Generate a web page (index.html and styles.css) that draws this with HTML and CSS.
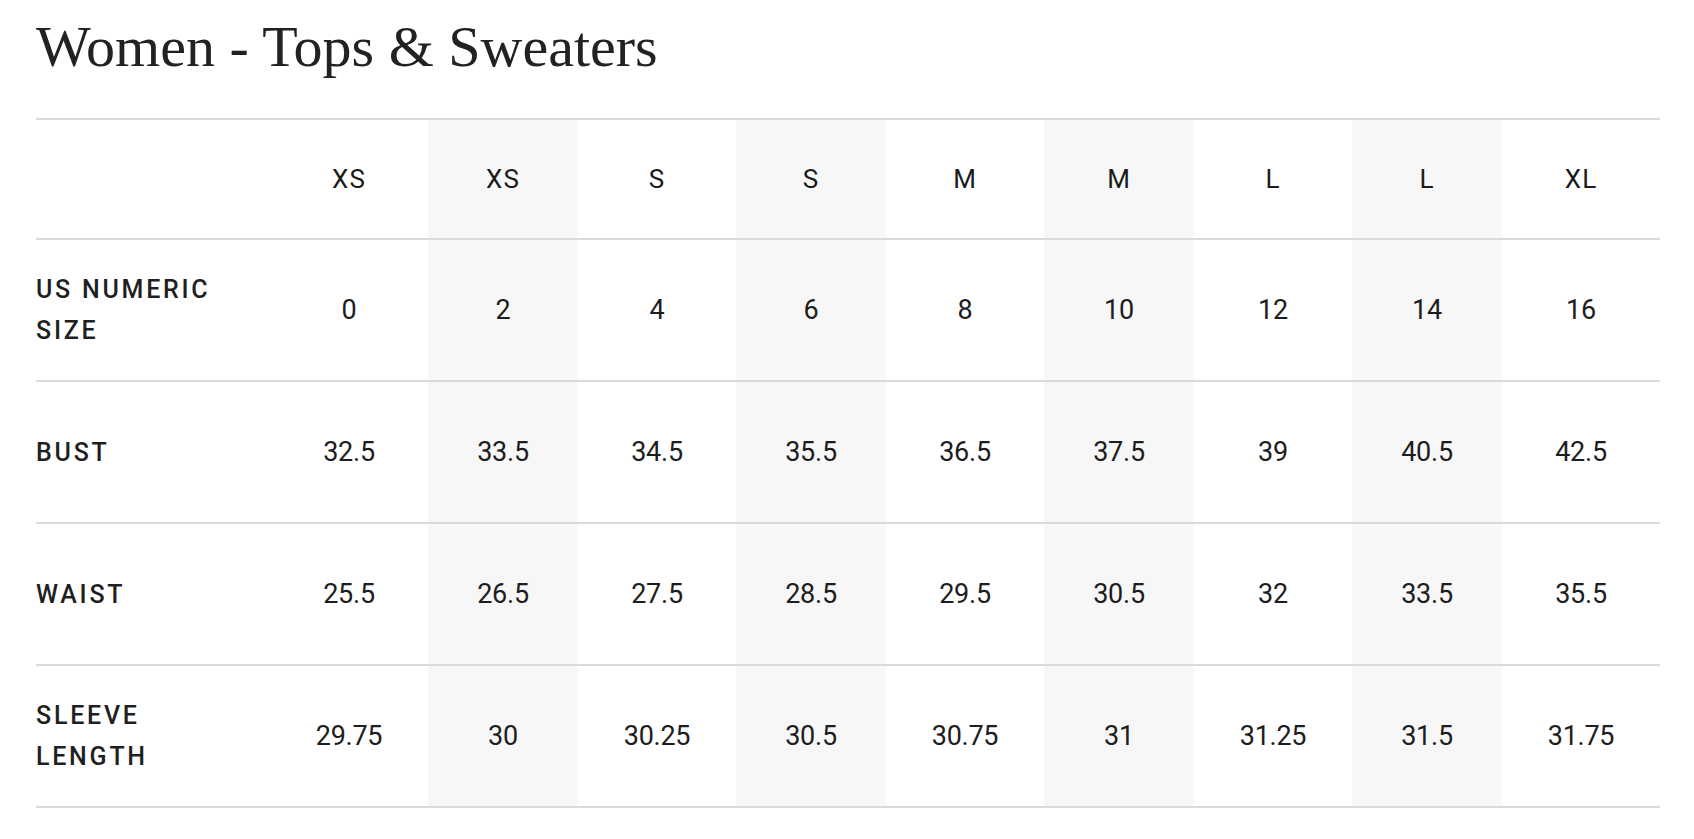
FILE: index.html
```html
<!DOCTYPE html>
<html lang="en">
<head>
<meta charset="utf-8">
<title>Women - Tops &amp; Sweaters</title>
<link rel="stylesheet" href="styles.css">
</head>
<body>
<main class="page">
  <h1 class="title">Women - Tops &amp; Sweaters</h1>
  <div class="chart" role="table">
    <div class="row head" role="row">
      <div class="cell label" role="columnheader"></div>
      <div class="cell size" role="columnheader">XS</div>
      <div class="cell size alt" role="columnheader">XS</div>
      <div class="cell size" role="columnheader">S</div>
      <div class="cell size alt" role="columnheader">S</div>
      <div class="cell size" role="columnheader">M</div>
      <div class="cell size alt" role="columnheader">M</div>
      <div class="cell size" role="columnheader">L</div>
      <div class="cell size alt" role="columnheader">L</div>
      <div class="cell size" role="columnheader">XL</div>
    </div>
    <div class="row" role="row">
      <div class="cell label" role="rowheader">US NUMERIC SIZE</div>
      <div class="cell num">0</div>
      <div class="cell num alt">2</div>
      <div class="cell num">4</div>
      <div class="cell num alt">6</div>
      <div class="cell num">8</div>
      <div class="cell num alt">10</div>
      <div class="cell num">12</div>
      <div class="cell num alt">14</div>
      <div class="cell num">16</div>
    </div>
    <div class="row" role="row">
      <div class="cell label" role="rowheader">BUST</div>
      <div class="cell num">32.5</div>
      <div class="cell num alt">33.5</div>
      <div class="cell num">34.5</div>
      <div class="cell num alt">35.5</div>
      <div class="cell num">36.5</div>
      <div class="cell num alt">37.5</div>
      <div class="cell num">39</div>
      <div class="cell num alt">40.5</div>
      <div class="cell num">42.5</div>
    </div>
    <div class="row" role="row">
      <div class="cell label" role="rowheader">WAIST</div>
      <div class="cell num">25.5</div>
      <div class="cell num alt">26.5</div>
      <div class="cell num">27.5</div>
      <div class="cell num alt">28.5</div>
      <div class="cell num">29.5</div>
      <div class="cell num alt">30.5</div>
      <div class="cell num">32</div>
      <div class="cell num alt">33.5</div>
      <div class="cell num">35.5</div>
    </div>
    <div class="row" role="row">
      <div class="cell label" role="rowheader">SLEEVE LENGTH</div>
      <div class="cell num">29.75</div>
      <div class="cell num alt">30</div>
      <div class="cell num">30.25</div>
      <div class="cell num alt">30.5</div>
      <div class="cell num">30.75</div>
      <div class="cell num alt">31</div>
      <div class="cell num">31.25</div>
      <div class="cell num alt">31.5</div>
      <div class="cell num">31.75</div>
    </div>
  </div>
</main>
</body>
</html>
```

FILE: styles.css
```css
html, body {
  margin: 0;
  padding: 0;
  background: #ffffff;
}

body {
  color: #1d1d1d;
  font-family: Roboto, "Liberation Sans", Arial, sans-serif;
}

.page {
  padding: 15px 35px 0 36px;
}

.title {
  margin: 0 0 39px;
  font-family: "Liberation Serif", "Times New Roman", serif;
  font-weight: 400;
  font-size: 58px;
  line-height: 64px;
  color: #222222;
  letter-spacing: 0;
}

.chart {
  border-top: 2px solid #dadada;
  width: 1624px;
}

.row {
  display: grid;
  grid-template-columns: 234px repeat(4, 158px 150px) 158px;
  height: 142px;
  box-sizing: border-box;
  border-bottom: 2px solid #dadada;
}

.row.head {
  height: 120px;
}

.cell {
  display: flex;
  align-items: center;
  justify-content: center;
  text-align: center;
}

.cell.alt {
  background: #f7f7f7;
}

.cell.label {
  justify-content: flex-start;
  text-align: left;
  padding-right: 40px;
  font-weight: 500;
  font-size: 25px;
  line-height: 41px;
  letter-spacing: 0.11em;
  color: #1f1f1f;
}

.cell.size {
  font-size: 26px;
  font-weight: 400;
  letter-spacing: 0.04em;
  color: #1a1a1a;
}

.cell.num {
  font-size: 27px;
  font-weight: 400;
  letter-spacing: -0.01em;
}
```
